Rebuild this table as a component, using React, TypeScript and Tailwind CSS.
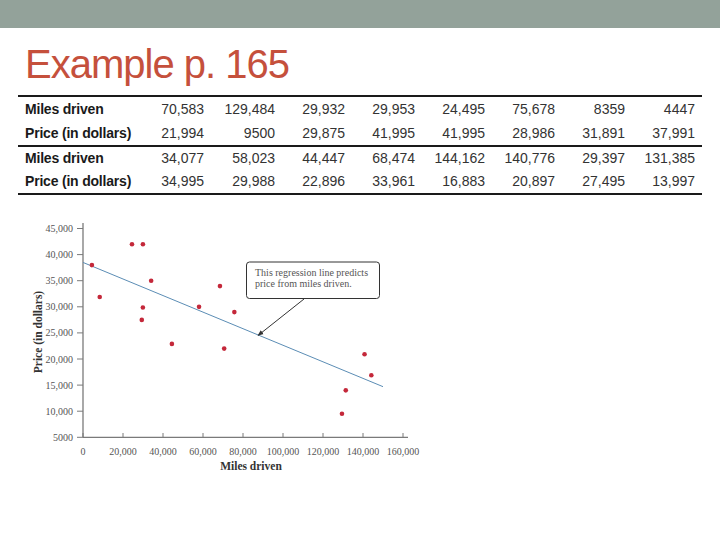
const rows = [
  { label: "Miles driven", values: ["70,583", "129,484", "29,932", "29,953", "24,495", "75,678", "8359", "4447"] },
  { label: "Price (in dollars)", values: ["21,994", "9500", "29,875", "41,995", "41,995", "28,986", "31,891", "37,991"] },
  { label: "Miles driven", values: ["34,077", "58,023", "44,447", "68,474", "144,162", "140,776", "29,397", "131,385"] },
  { label: "Price (in dollars)", values: ["34,995", "29,988", "22,896", "33,961", "16,883", "20,897", "27,495", "13,997"] },
];

const points: [number, number][] = [
  [70583, 21994], [129484, 9500], [29932, 29875], [29953, 41995],
  [24495, 41995], [75678, 28986], [8359, 31891], [4447, 37991],
  [34077, 34995], [58023, 29988], [44447, 22896], [68474, 33961],
  [144162, 16883], [140776, 20897], [29397, 27495], [131385, 13997],
];

// chart coordinates are page pixels (viewBox matches the page)
const px = (m: number) => 83 + m / 500;
const py = (p: number) => 438.3 - ((p - 5000) / 5000) * 26.1;

const yTicks = [45000, 40000, 35000, 30000, 25000, 20000, 15000, 10000, 5000];
const xTicks = [0, 20000, 40000, 60000, 80000, 100000, 120000, 140000, 160000];

function fmt(n: number) {
  if (n === 0) return "0";
  if (n === 5000) return "5000";
  return n.toLocaleString("en-US");
}

function Chart() {
  return (
    <svg
      width={410}
      height={270}
      viewBox="20 210 410 270"
      className="ml-[20px] mt-[14px] block"
      style={{ fontFamily: '"Liberation Serif", serif' }}
    >
      <defs>
        <marker id="head" viewBox="0 0 10 10" refX="9" refY="5" markerWidth="6" markerHeight="6" orient="auto">
          <path d="M0 1 L10 5 L0 9 Z" fill="#333" />
        </marker>
      </defs>
      <line x1={83} y1={224} x2={83} y2={438.3} stroke="#7a7a7a" strokeWidth={1.3} />
      <line x1={83} y1={438.3} x2={408} y2={438.3} stroke="#7a7a7a" strokeWidth={1.3} />
      {yTicks.map((t) => (
        <g key={t}>
          <line x1={77} y1={py(t)} x2={83} y2={py(t)} stroke="#7a7a7a" strokeWidth={1} />
          <text x={73} y={py(t) + 3.5} fontSize={10} fill="#555" textAnchor="end">
            {fmt(t)}
          </text>
        </g>
      ))}
      {xTicks.map((t) => (
        <g key={t}>
          <line x1={px(t)} y1={434} x2={px(t)} y2={438.3} stroke="#7a7a7a" strokeWidth={1} />
          <text x={px(t)} y={456} fontSize={10} fill="#555" textAnchor="middle">
            {fmt(t)}
          </text>
        </g>
      ))}
      <text x={251} y={471} fontSize={11.5} fontWeight="bold" fill="#333" textAnchor="middle">
        Miles driven
      </text>
      <text
        x={0}
        y={0}
        fontSize={11.5}
        fontWeight="bold"
        fill="#333"
        textAnchor="middle"
        transform="translate(42 333) rotate(-90)"
      >
        Price (in dollars)
      </text>
      <line x1={px(0)} y1={py(38500)} x2={px(150000)} y2={py(14700)} stroke="#5b8db5" strokeWidth={1} />
      {points.map(([m, p], i) => (
        <circle key={i} cx={px(m)} cy={py(p)} r={2.3} fill="#c4283a" />
      ))}
      <rect x={246.5} y={263} width={133} height={36.5} rx={3} fill="white" stroke="#333" strokeWidth={1} />
      <text x={255} y={277} fontSize={10} fill="#555">
        This regression line predicts
      </text>
      <text x={255} y={288} fontSize={10} fill="#555">
        price from miles driven.
      </text>
      <line x1={304} y1={300} x2={258} y2={336.5} stroke="#333" strokeWidth={1} markerEnd="url(#head)" />
    </svg>
  );
}

export default function App() {
  return (
    <div className="h-[540px] w-[720px] overflow-hidden bg-white" style={{ fontFamily: '"Liberation Sans", Arial, sans-serif' }}>
      <div className="h-[28px] bg-[#93a29a]" />
      <h1 className="ml-[25px] mt-[16px] text-[40px] leading-none tracking-[-1px] text-[#c5503c]">
        Example p. 165
      </h1>
      <div className="mx-[18px] mt-[11px] border-y-2 border-[#1a1a1a] text-[14px]">
        {rows.map((row, i) => (
          <div
            key={i}
            className={`grid h-6 grid-cols-[116px_70px_71px_70px_70px_70px_70px_70px_70px] items-center ${
              i === 2 ? "border-t-2 border-[#1a1a1a]" : ""
            }`}
          >
            <span className="whitespace-nowrap pl-[7px] font-bold tracking-[-0.2px] text-[#1a1a1a]">{row.label}</span>
            {row.values.map((v, j) => (
              <span key={j} className="text-right text-[#333]">
                {v}
              </span>
            ))}
          </div>
        ))}
      </div>
      <Chart />
    </div>
  );
}
